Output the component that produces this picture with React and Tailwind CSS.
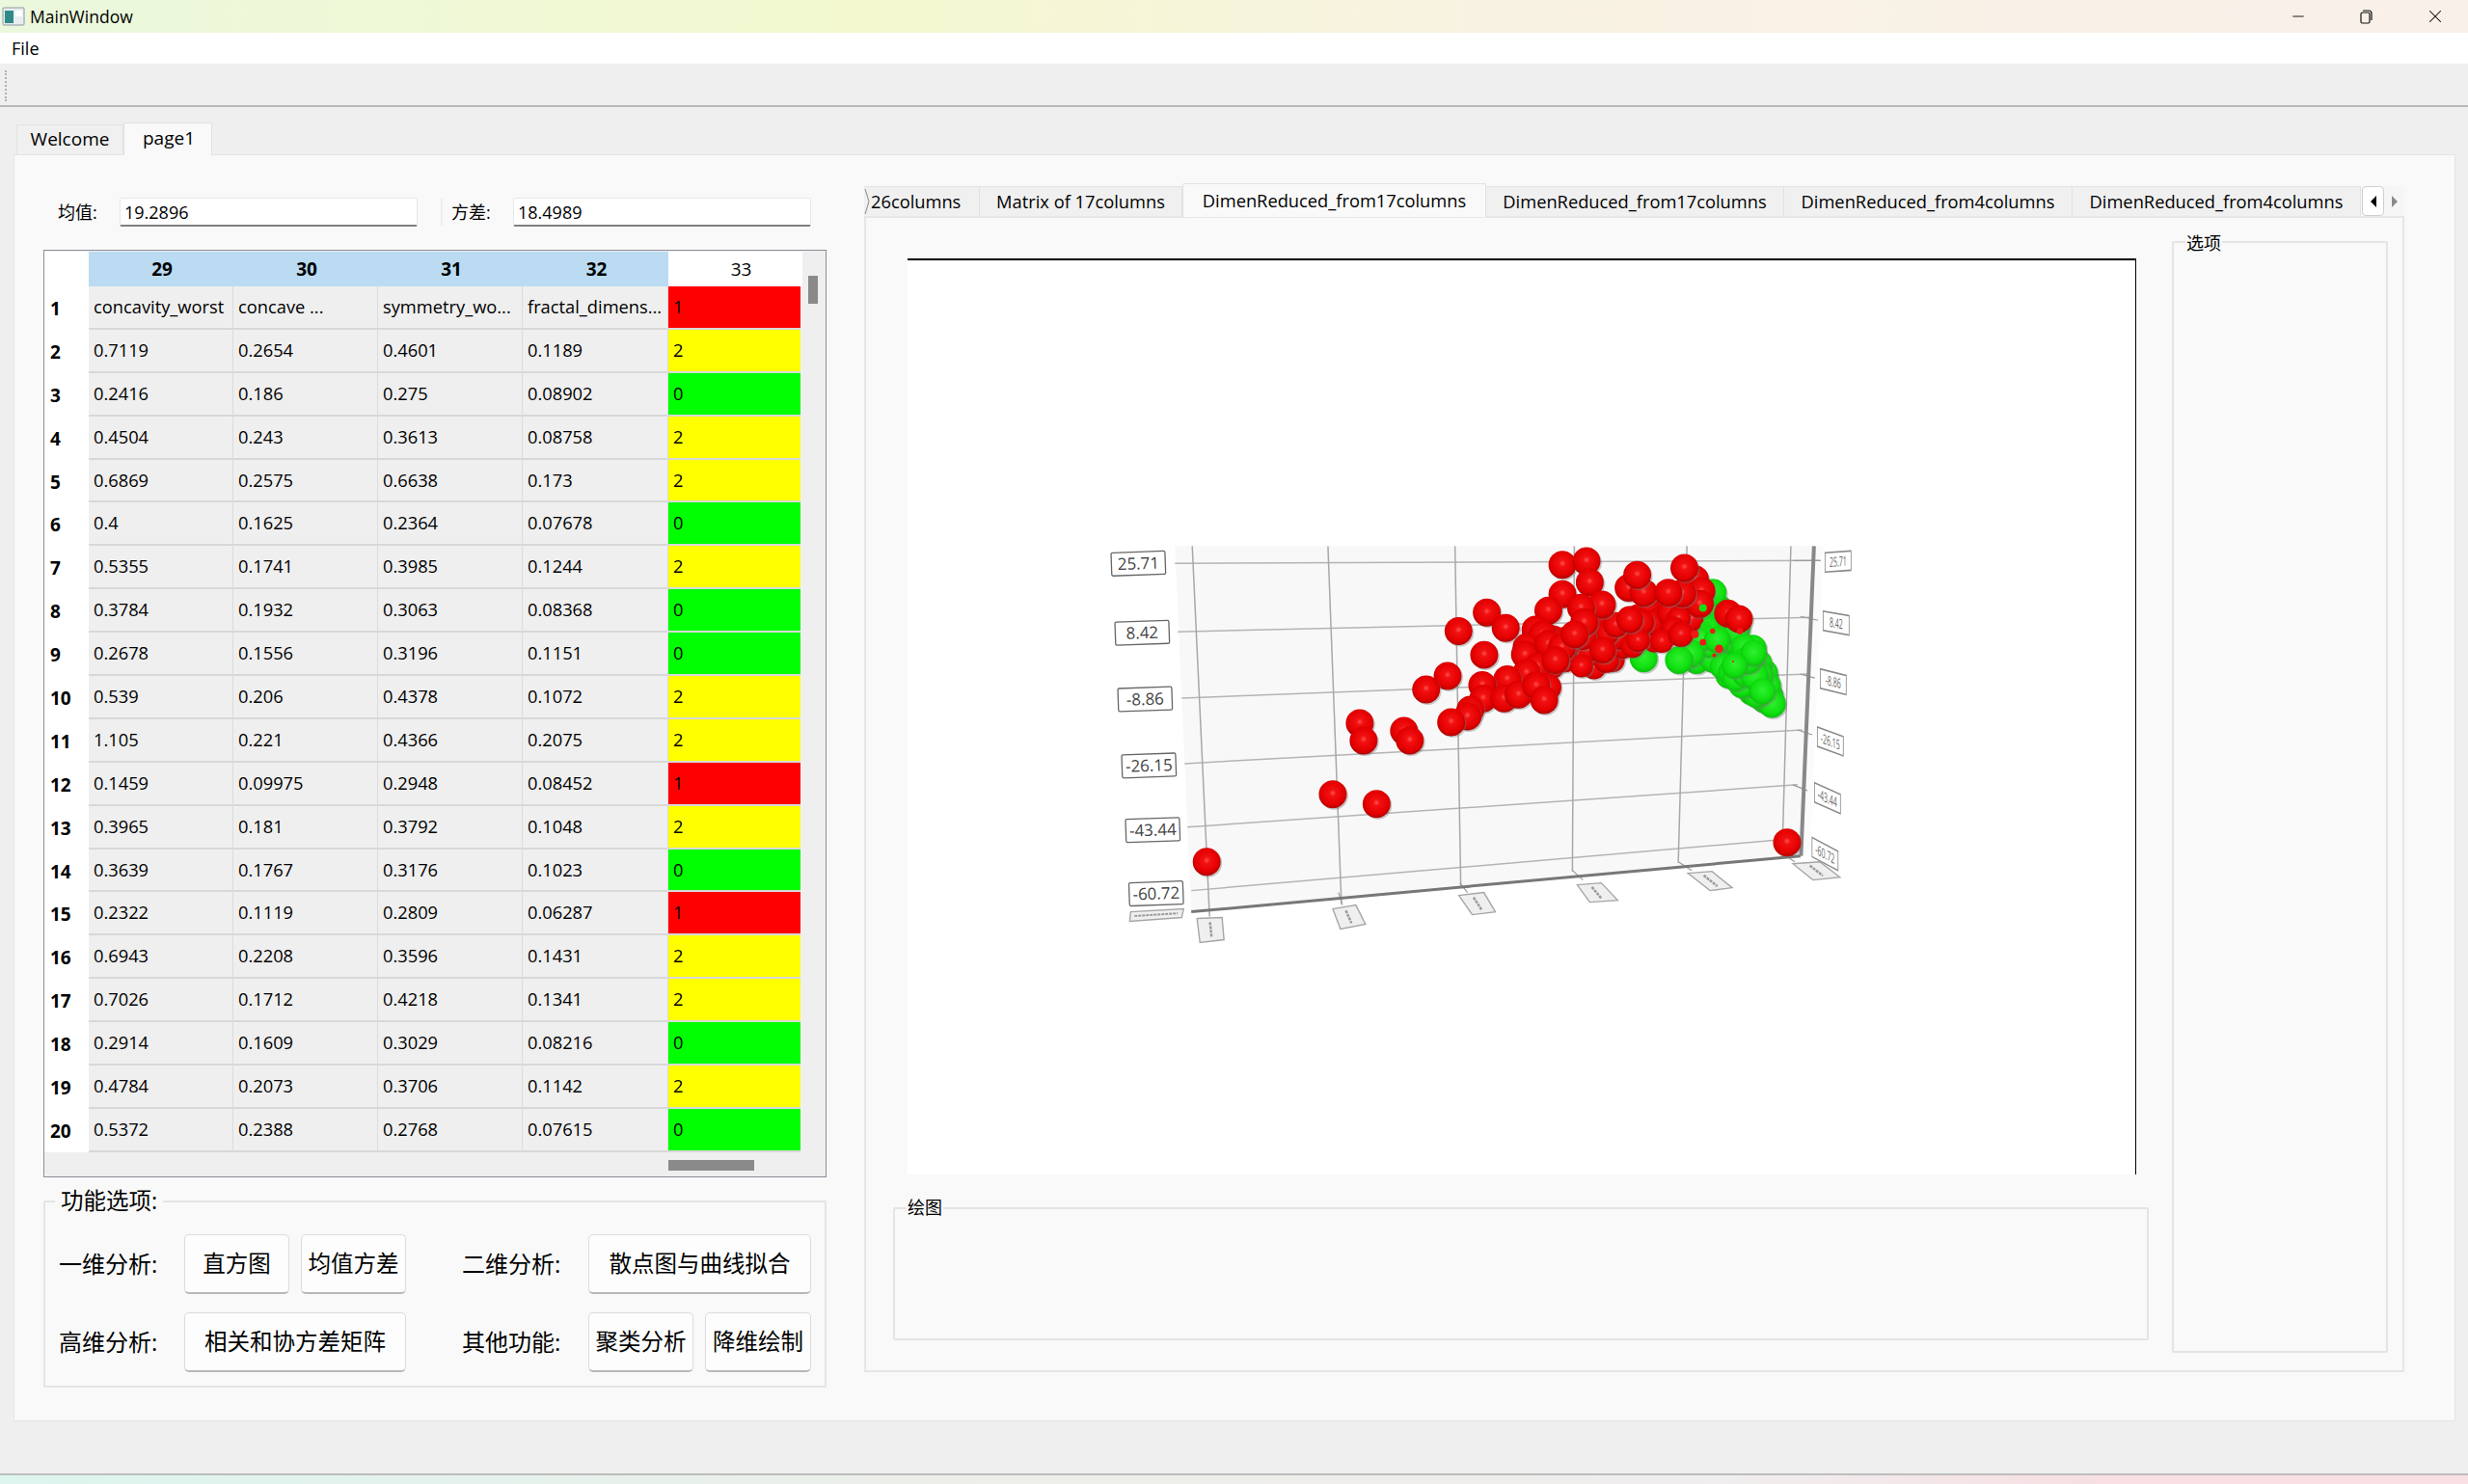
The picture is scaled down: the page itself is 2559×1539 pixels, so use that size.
import { Minus, X } from 'lucide-react'

const font = "[font-family:'Open_Sans','Noto_Sans_CJK_SC',sans-serif]"

const rows = [
  ['concavity_worst', 'concave ...', 'symmetry_wo...', 'fractal_dimens...', 1],
  ['0.7119', '0.2654', '0.4601', '0.1189', 2],
  ['0.2416', '0.186', '0.275', '0.08902', 0],
  ['0.4504', '0.243', '0.3613', '0.08758', 2],
  ['0.6869', '0.2575', '0.6638', '0.173', 2],
  ['0.4', '0.1625', '0.2364', '0.07678', 0],
  ['0.5355', '0.1741', '0.3985', '0.1244', 2],
  ['0.3784', '0.1932', '0.3063', '0.08368', 0],
  ['0.2678', '0.1556', '0.3196', '0.1151', 0],
  ['0.539', '0.206', '0.4378', '0.1072', 2],
  ['1.105', '0.221', '0.4366', '0.2075', 2],
  ['0.1459', '0.09975', '0.2948', '0.08452', 1],
  ['0.3965', '0.181', '0.3792', '0.1048', 2],
  ['0.3639', '0.1767', '0.3176', '0.1023', 0],
  ['0.2322', '0.1119', '0.2809', '0.06287', 1],
  ['0.6943', '0.2208', '0.3596', '0.1431', 2],
  ['0.7026', '0.1712', '0.4218', '0.1341', 2],
  ['0.2914', '0.1609', '0.3029', '0.08216', 0],
  ['0.4784', '0.2073', '0.3706', '0.1142', 2],
  ['0.5372', '0.2388', '0.2768', '0.07615', 0],
]

const classColors = { 0: 'bg-[#00ff00]', 1: 'bg-[#ff0000]', 2: 'bg-[#ffff00]' }

// chart data, traced from the reference
const hLines = [
  [1218, 583, 1888, 580], [1221, 654, 1880, 639], [1225, 723, 1875, 698],
  [1228, 791, 1870, 756], [1231, 857, 1865, 813], [1235, 923, 1860, 869],
]
const vLines = [
  [1236, 565, 1254, 950], [1377, 565, 1391, 937], [1509, 565, 1515, 918],
  [1633, 565, 1631, 903], [1750, 565, 1741, 894], [1858, 565, 1849, 885],
]
const ticks = [
  [1514, 915, 1522, 925], [1631, 902, 1642, 912], [1741, 893, 1755, 902],
  [1849, 884, 1862, 893], [1388, 925, 1392, 938],
  [1860, 580, 1889, 580], [1868, 638, 1886, 642], [1868, 698, 1883, 702],
  [1865, 756, 1880, 761], [1860, 813, 1875, 819], [1855, 869, 1870, 876],
]
const leftLabels = [
  ['25.71', 1180, 583], ['8.42', 1184, 655], ['-8.86', 1187, 724],
  ['-26.15', 1191, 793], ['-43.44', 1195, 860], ['-60.72', 1198.5, 926],
]
const rightLabels = [
  ['25.71', 1907, 581, -4], ['8.42', 1905, 645, 10], ['-8.86', 1902, 706, 14],
  ['-26.15', 1899, 768, 20], ['-43.44', 1896, 827, 24], ['-60.72', 1893.5, 885, 28],
]
const bottomLabels = [
  [[1241, 952], [1267, 951], [1269, 974], [1244, 977]],
  [[1382, 942], [1406, 938], [1416, 958], [1390, 963]],
  [[1513, 928], [1539, 925], [1551, 945], [1527, 948]],
  [[1636, 917], [1661, 915], [1678, 933], [1649, 935]],
  [[1751, 905], [1776, 903], [1797, 920], [1774, 923]],
  [[1860, 895], [1888, 893], [1909, 909], [1881, 912]],
  [[1171, 955], [1172, 945], [1227, 942], [1225, 951]],
]

const z5 = ([x, y, r = 14.5]) => [1500 + x / 3, 550 + y / 3, r]

const hash = (x, y) => {
  const s = Math.sin(x * 12.9898 + y * 78.233) * 43758.5453
  return s - Math.floor(s)
}

const interp = (pts, x) => {
  for (let i = 1; i < pts.length; i++) {
    if (x <= pts[i][0]) {
      const [x0, y0] = pts[i - 1]
      const [x1, y1] = pts[i]
      return y0 + ((x - x0) / (x1 - x0)) * (y1 - y0)
    }
  }
  return pts[pts.length - 1][1]
}

const shuffled = dots => dots
  .map(d => [hash(d[0], d[1]), d])
  .sort((a, b) => a[0] - b[0])
  .map(p => p[1])

const greenList = [
  [830, 190], [850, 240], [880, 270], [905, 300], [1015, 537], [985, 515], [950, 490], [1000, 480],
  [975, 450], [925, 450], [972, 410], [955, 365], [920, 420], [880, 400], [830, 395], [780, 400],
  [725, 400], [615, 395], [900, 340], [860, 330], [910, 370], [850, 370], [800, 360], [810, 300],
  [960, 450], [940, 400], [890, 440], [760, 380], [990, 440],
].map(z5)
const greenFill = []
for (let t = 0; t <= 1; t += 0.1) {
  const cx = 820 + 180 * t
  const cy = 300 + 210 * t
  const w = 70 * (1 - t * 0.7)
  for (let o = -w; o <= w; o += 30) {
    greenFill.push(z5([cx + o * 0.76 + hash(t, o) * 14, cy - o * 0.65 + hash(o, t) * 14, 13.5]))
  }
}
const greenDots = shuffled([...greenFill, ...greenList])

const bodyTop = [[280, 340], [340, 330], [500, 290], [600, 260], [700, 245], [800, 240]]
const bodyBottom = [[280, 430], [340, 420], [450, 425], [520, 400], [600, 365], [700, 355], [800, 305]]
const bodyFill = []
for (let x = 280; x <= 780; x += 30) {
  const bottom = interp(bodyBottom, x)
  for (let y = interp(bodyTop, x); y <= bottom; y += 28) {
    const jx = (hash(x, y) - 0.5) * 26
    const jy = (hash(y, x) - 0.5) * 22
    bodyFill.push(z5([x + jx, y + jy, 12 + hash(x + 1, y) * 2]))
  }
}
const bodyDots = shuffled(bodyFill)

const looseDots = [
  [878, 255], [912, 272], [775, 148], [795, 185], [790, 225], [735, 192], [568, 175], [615, 190],
  [595, 135], [692, 190], [742, 113], [362, 103], [437, 92], [447, 158], [362, 195], [318, 246],
  [485, 227], [420, 237], [430, 282], [278, 305], [300, 320], [250, 360], [245, 383], [318, 350],
  [360, 360], [400, 320], [126, 252], [38, 310], [185, 300], [118, 384], [285, 420], [250, 440],
  [340, 400], [190, 460], [112, 478], [115, 520], [180, 520], [225, 508], [315, 485], [280, 480],
  [305, 525], [4, 450],
].map(z5)
const farDots = [
  [1525, 735], [1522, 742], [1505, 748], [1410, 749], [1414, 767], [1456, 757], [1462, 767],
  [1382, 823], [1427.5, 833], [1251, 893], [1854, 873], [1479, 714],
].map(([x, y]) => [x, y, 14.5])

const patches = [
  [850, 365, 13], [835, 385, 6], [894, 405, 3], [800, 345, 10], [915, 310, 10], [775, 320, 12],
  [830, 310, 8],
].map(([x, y, r]) => [1500 + x / 3, 550 + y / 3, r / 3])
const greenPatches = [[810, 296, 18], [800, 238, 12], [780, 320, 8]].map(([x, y, r]) => [1500 + x / 3, 550 + y / 3, r / 3])

function Sphere({ c, fill }) {
  return (
    <g>
      <circle cx={c[0] + 1.5} cy={c[1] + 1.5} r={c[2]} fill="#777" opacity="0.4" />
      <circle cx={c[0]} cy={c[1]} r={c[2]} fill={fill} />
    </g>
  )
}

function Chart() {
  return (
    <svg viewBox="941 268 1274 950" className="w-full h-full block">
      <defs>
        <radialGradient id="red" cx="50%" cy="45%" r="55%">
          <stop offset="0%" stopColor="#ff5050" />
          <stop offset="22%" stopColor="#f21010" />
          <stop offset="75%" stopColor="#e40000" />
          <stop offset="100%" stopColor="#b00000" />
        </radialGradient>
        <radialGradient id="green" cx="50%" cy="45%" r="55%">
          <stop offset="0%" stopColor="#30f030" />
          <stop offset="70%" stopColor="#10e010" />
          <stop offset="100%" stopColor="#0cc00c" />
        </radialGradient>
      </defs>
      <polygon points="1218,565 1883,565 1868,887 1235,945" fill="#f8f8f8" />
      <polygon points="1883,565 1892,565 1878,880 1868,887" fill="#fbfbfb" />
      {hLines.map((l, i) => (
        <line key={i} x1={l[0]} y1={l[1]} x2={l[2]} y2={l[3]} stroke="#b4b4b4" strokeWidth="1.5" />
      ))}
      {vLines.map((l, i) => (
        <line key={i} x1={l[0]} y1={l[1]} x2={l[2]} y2={l[3]} stroke="#a8a8a8" strokeWidth="1.5" />
      ))}
      {ticks.map((l, i) => (
        <line key={i} x1={l[0]} y1={l[1]} x2={l[2]} y2={l[3]} stroke="#999" strokeWidth="1.2" />
      ))}
      <line x1="1882" y1="565" x2="1868.5" y2="887" stroke="#888" strokeWidth="4" />
      <line x1="1235" y1="945" x2="1868" y2="887" stroke="#777" strokeWidth="3" />

      {leftLabels.map(([t, x, y]) => (
        <g key={t} transform={`translate(${x} ${y}) rotate(-2)`}>
          <rect x="-28" y="-12" width="56" height="24" rx="1.5" fill="#fff" stroke="#666" strokeWidth="1.3" />
          <text y="6" textAnchor="middle" fontSize="17" fill="#444" fontFamily="Open Sans, sans-serif">{t}</text>
        </g>
      ))}
      {rightLabels.map(([t, x, y, skew]) => (
        <g key={t} transform={`translate(${x} ${y}) skewY(${skew}) scale(0.5 1)`}>
          <rect x="-27" y="-10" width="54" height="20" fill="#fff" stroke="#888" strokeWidth="1.6" />
          <text y="5" textAnchor="middle" fontSize="14" fill="#666" fontFamily="Open Sans, sans-serif">{t}</text>
        </g>
      ))}
      {bottomLabels.map((p, i) => {
        const mid = (a, b) => [(a[0] + b[0]) / 2, (a[1] + b[1]) / 2]
        const a = mid(p[0], p[1])
        const b = mid(p[2], p[3])
        return (
          <g key={i}>
            <polygon points={p.map(q => q.join(',')).join(' ')} fill="#efefef" stroke="#a6a6a6" strokeWidth="1.4" />
            {i === 6
              ? <line x1={1176} y1={949.5} x2={1221} y2={946.5} stroke="#9a9a9a" strokeWidth="2" strokeDasharray="3 1" />
              : <line x1={a[0] + (b[0] - a[0]) * 0.18} y1={a[1] + (b[1] - a[1]) * 0.18} x2={a[0] + (b[0] - a[0]) * 0.82} y2={a[1] + (b[1] - a[1]) * 0.82} stroke="#9a9a9a" strokeWidth="2.5" strokeDasharray="3 1" />}
          </g>
        )
      })}

      {greenDots.map((c, i) => <Sphere key={i} c={c} fill="url(#green)" />)}
      {bodyDots.map((c, i) => <Sphere key={i} c={c} fill="url(#red)" />)}
      {looseDots.map((c, i) => <Sphere key={i} c={c} fill="url(#red)" />)}
      {farDots.map((c, i) => <Sphere key={i} c={c} fill="url(#red)" />)}
      {greenPatches.map((c, i) => <circle key={i} cx={c[0]} cy={c[1]} r={c[2]} fill="#14e014" />)}
      {patches.map((c, i) => <circle key={i} cx={c[0]} cy={c[1]} r={c[2]} fill="#f01818" />)}
    </svg>
  )
}

function QtButton({ children, className }) {
  return (
    <button className={`h-[62px] bg-[#fdfdfd] border border-[#dcdcdc] border-b-2 border-b-[#b8b8b8] rounded-[5px] text-[23.5px] text-black flex items-center justify-center ${className}`}>
      {children}
    </button>
  )
}

function Field({ value }) {
  return (
    <div className="w-[309px] h-[30px] bg-white border border-[#e8e8e8] border-b-2 border-b-[#808080] rounded-[2px] pl-1 text-[18px] leading-[28px] text-black">
      {value}
    </div>
  )
}

function Table() {
  return (
    <div className="h-[962px] border border-[#8d8d99] bg-[#efefef] flex flex-col overflow-hidden">
      <div className="flex h-[935px]">
        <div className="w-[786px] text-[18.3px] text-black">
          <div className="flex h-[37px] pt-px items-center text-center text-[19px]">
            <div className="w-[46px] h-full bg-white" />
            <div className="w-[601px] h-full bg-[#bbdbf3] flex font-bold leading-[36px]">
              <div className="w-[150px] pl-[2px]">29</div>
              <div className="w-[150px] pl-[2px]">30</div>
              <div className="w-[150px] pl-[2px]">31</div>
              <div className="w-[151px] pl-[2px]">32</div>
            </div>
            <div className="w-[139px] h-full bg-white leading-[36px] pl-[12px]">33</div>
          </div>
          {rows.map((row, i) => (
            <div key={i} className="flex h-[44.9px]">
              <div className="w-[46px] bg-white font-bold text-[19px] pl-[6px] leading-[46px]">{i + 1}</div>
              {row.slice(0, 4).map((cell, j) => (
                <div key={j} className={`${j === 3 ? 'w-[151px]' : 'w-[150px]'} pl-[5px] leading-[41px] whitespace-nowrap overflow-hidden bg-[#efefef] border-r border-r-[#dcdcdc] border-b-2 border-b-[#d8d8d8]`}>
                  {cell}
                </div>
              ))}
              <div className={`w-[137px] pl-[5px] leading-[41px] border-b-2 border-b-[#d8d8d8] ${classColors[row[4]]}`}>{row[4]}</div>
            </div>
          ))}
        </div>
        <div className="flex-1 pl-[6px] pt-[26px]">
          <div className="w-[10px] h-[29px] bg-[#8a8a8a]" />
        </div>
      </div>
      <div className="pl-[647px] pt-[8px]">
        <div className="w-[89px] h-[11px] bg-[#8a8a8a]" />
      </div>
    </div>
  )
}

function FunctionGroup() {
  return (
    <div className="relative mt-[24px] h-[194px] border-2 border-[#e4e4e4] rounded-[2px] px-[14px] pt-[33px]">
      <span className="absolute left-[10px] -top-[17px] px-[6px] bg-[#f9f9f9] text-[23.5px] leading-[30px] text-black">功能选项:</span>
      <div className="flex items-center">
        <span className="w-[130px] text-[24px] text-black">一维分析:</span>
        <QtButton className="w-[109px]">直方图</QtButton>
        <QtButton className="w-[109px] ml-[12px]">均值方差</QtButton>
        <span className="w-[131px] ml-[58px] text-[24px] text-black">二维分析:</span>
        <QtButton className="w-[231px]">散点图与曲线拟合</QtButton>
      </div>
      <div className="flex items-center mt-[19px]">
        <span className="w-[130px] text-[24px] text-black">高维分析:</span>
        <QtButton className="w-[230px]">相关和协方差矩阵</QtButton>
        <span className="w-[131px] ml-[58px] text-[24px] text-black">其他功能:</span>
        <QtButton className="w-[109px]">聚类分析</QtButton>
        <QtButton className="w-[110px] ml-[12px]">降维绘制</QtButton>
      </div>
    </div>
  )
}

function PlotTab({ label, className }) {
  return (
    <div className={`h-[31px] bg-[#f0f0f0] border-r border-t border-[#e2e2e2] flex items-center justify-center text-[18.3px] text-black whitespace-nowrap ${className}`}>
      {label}
    </div>
  )
}

function RightPanel() {
  return (
    <div className="w-[1597px] ml-[39px] pt-[29px]">
      <div className="flex items-end h-[34px]">
        <div className="w-[120px] h-[31px] bg-[#f0f0f0] border-r border-t border-[#e2e2e2] flex items-center text-[18.3px] text-black">
          <svg width="7" height="28" viewBox="0 0 7 28" className="shrink-0" fill="none" stroke="#8a8a8a"><path d="M1 1 L5 14 L1 27" /></svg>
          <span>26columns</span>
        </div>
        <PlotTab label="Matrix of 17columns" className="w-[210px]" />
        <div className="w-[315px] h-[35px] -mb-px relative bg-[#f9f9f9] border border-b-0 border-[#e2e2e2] rounded-t-[2px] flex items-center justify-center text-[18.3px] text-black">
          DimenReduced_from17columns
        </div>
        <PlotTab label="DimenReduced_from17columns" className="w-[309px]" />
        <PlotTab label="DimenReduced_from4columns" className="w-[299px]" />
        <PlotTab label="DimenReduced_from4columns" className="w-[299px]" />
        <div className="w-[23px] h-[31px] bg-white border border-[#cfcfcf] rounded-[4px] flex items-center justify-center ml-[1px]">
          <svg width="8" height="14" viewBox="0 0 8 14"><polygon points="7,1 1,7 7,13" fill="#000" /></svg>
        </div>
        <div className="w-[21px] h-[31px] flex items-center justify-center bg-[#f6f6f6]">
          <svg width="8" height="14" viewBox="0 0 8 14"><polygon points="1,1 7,7 1,13" fill="#8a8a8a" /></svg>
        </div>
      </div>
      <div className="h-[1199px] border-2 border-[#e6e6e6] flex">
        <div className="w-[1354px] pl-[28px]">
          <div className="ml-[15px] mt-[42px] w-[1274px] h-[950px] bg-white border-t-2 border-t-black border-r border-r-black">
            <Chart />
          </div>
          <div className="relative mt-[34px] w-[1302px] h-[138px] border-2 border-[#e4e4e4] rounded-[2px]">
            <span className="absolute left-[12px] -top-[15px] px-[1px] bg-[#f9f9f9] text-[18px] leading-[26px] text-black">绘图</span>
          </div>
        </div>
        <div className="relative mt-[24px] h-[1153px] w-[224px] border-2 border-[#e4e4e4] rounded-[2px]">
          <span className="absolute left-[12px] -top-[13px] px-[1px] bg-[#f9f9f9] text-[18px] leading-[26px] text-black">选项</span>
        </div>
      </div>
    </div>
  )
}

export default function App() {
  return (
    <div className={`w-[2559px] h-[1539px] bg-[#efefef] flex flex-col overflow-hidden ${font}`}>
      {/* title bar */}
      <div className="h-[34px] flex items-center bg-[linear-gradient(90deg,#ebf8dd_0%,#f3f8cf_35%,#f8f2e2_60%,#f9f0ea_100%)]">
        <svg width="24" height="20" viewBox="0 0 24 20" className="ml-[2px]">
          <rect x="1" y="1" width="22" height="18" rx="1" fill="#e8eef0" stroke="#8d9aa0" />
          <rect x="3" y="4" width="9" height="13" fill="#2f8a86" />
          <rect x="14" y="4" width="7" height="6" fill="#ffffff" />
        </svg>
        <span className="ml-[5px] text-[17.5px] text-black">MainWindow</span>
        <div className="ml-auto flex items-center">
          <Minus size={18} strokeWidth={1.2} className="text-black mr-[52px]" />
          <svg width="18" height="18" viewBox="0 0 18 18" className="mr-[52px]" fill="none" stroke="#111" strokeWidth="1.2">
            <rect x="4" y="5" width="9" height="11" rx="1.5" />
            <path d="M6 3h6a3 3 0 0 1 3 3v7" />
          </svg>
          <X size={22} strokeWidth={1.1} className="text-black mr-[23px]" />
        </div>
      </div>
      {/* menu bar */}
      <div className="h-[32px] bg-white text-[18px] text-black pl-[12px] leading-[32px]">File</div>
      {/* tool bar */}
      <div className="mt-[2px] h-[43px] border-b-2 border-[#b9b9b9] flex items-center pl-[5px]">
        <div className="h-[32px] border-l-2 border-dotted border-[#b0b0b0]" />
      </div>
      {/* tabs */}
      <div className="mt-[15px] pl-[14px] flex items-end h-[34px]">
        <div className="ml-[3px] w-[111px] h-[31px] bg-[#f0f0f0] border border-b-0 border-[#e2e2e2] flex items-center justify-center text-[19px] text-black pb-[2px]">Welcome</div>
        <div className="w-[92px] h-[34px] -mb-px relative bg-[#f9f9f9] border border-b-0 border-[#e2e2e2] flex items-center justify-center text-[19px] text-black pb-[2px] pl-[2px]">page1</div>
      </div>
      <div className="ml-[14px] w-[2532px] h-[1314px] bg-[#f9f9f9] border border-[#e4e4e4] flex">
        <div className="w-[812px] ml-[30px] pt-[44px]">
          <div className="flex items-center h-[30px] text-black">
            <span className="w-[79px] pl-[15px] text-[18px]">均值:</span>
            <Field value="19.2896" />
            <div className="ml-[24px] w-[2px] h-[30px] bg-[#eeeeee]" />
            <span className="w-[73px] pl-[9px] text-[18px]">方差:</span>
            <Field value="18.4989" />
          </div>
          <div className="mt-[24px]"><Table /></div>
          <FunctionGroup />
        </div>
        <RightPanel />
      </div>
      {/* bottom strip */}
      <div className="mt-auto h-[11px] border-t-2 border-[#bdbdbd] bg-[linear-gradient(90deg,#dcf5ee_0%,#eeeeea_40%,#f0eeee_70%,#f7dfe3_85%,#f7dfe3_100%)]" />
    </div>
  )
}
